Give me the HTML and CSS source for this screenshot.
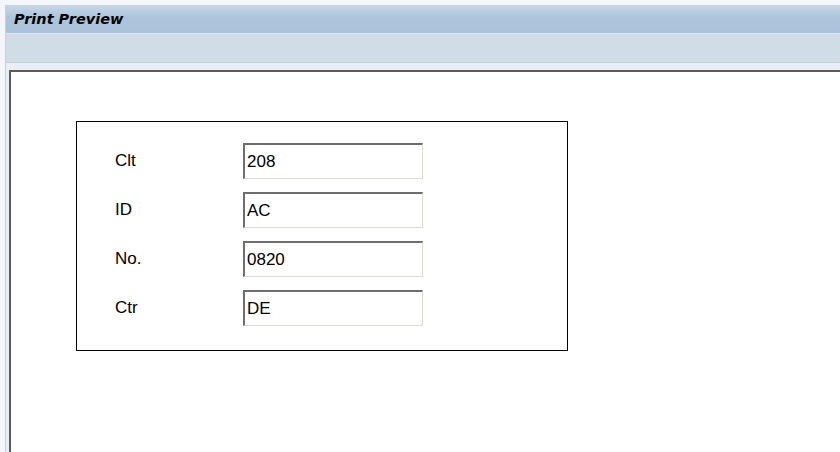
FILE: index.html
```html
<!DOCTYPE html>
<html>
<head>
<meta charset="utf-8">
<link rel="stylesheet" href="styles.css">
</head>
<body>
<div class="frame">
  <div class="title">Print Preview</div>
  <div class="toolbar"></div>
  <div class="gap"></div>
  <div class="content">
    <div class="box">
      <div class="row"><span class="label">Clt</span><span class="field">208</span></div>
      <div class="row"><span class="label">ID</span><span class="field">AC</span></div>
      <div class="row"><span class="label">No.</span><span class="field">0820</span></div>
      <div class="row"><span class="label">Ctr</span><span class="field">DE</span></div>
    </div>
  </div>
</div>
</body>
</html>
```
FILE: styles.css
```css
html, body {
  margin: 0;
  padding: 0;
  width: 840px;
  height: 452px;
  overflow: hidden;
  background: #f3f6fa;
  font-family: "Liberation Sans", Arial, sans-serif;
}
.frame {
  margin: 5px 0 0 5px;
  border-top: 1px solid #c6d3df;
  border-left: 1px solid #c6d3df;
  height: 446px;
  display: flex;
  flex-direction: column;
  background: #e9eff5;
}
.title {
  height: 28px;
  box-sizing: border-box;
  background: linear-gradient(#c6d7e6, #adc5db 40%, #abc3da);
  border-bottom: 1px solid #dfe7ef;
  font-family: "DejaVu Sans", Verdana, sans-serif;
  font-weight: bold;
  font-style: italic;
  font-size: 14.5px;
  color: #000;
  line-height: 26px;
  padding-left: 8px;
}
.toolbar {
  height: 28px;
  background: #d0dde7;
  border-bottom: 1px solid #c2cfdb;
}
.gap {
  height: 7px;
}
.content {
  flex: 1;
  margin-left: 3px;
  background: #fff;
  border-top: 2px solid #5a5a5a;
  border-left: 2px solid #5a5a5a;
  padding: 49px 0 0 65px;
}
.box {
  width: 492px;
  height: 230px;
  border: 1px solid #000;
  box-sizing: border-box;
  padding: 21px 0 0 38px;
  display: flex;
  flex-direction: column;
  gap: 13px;
}
.row {
  display: flex;
  align-items: center;
  height: 36px;
}
.label {
  width: 128px;
  font-size: 17px;
  color: #000;
}
.field {
  width: 180px;
  height: 36px;
  box-sizing: border-box;
  border-top: 2px solid #6e6e6e;
  border-left: 2px solid #6e6e6e;
  border-right: 1px solid #dcdcd4;
  border-bottom: 1px solid #dcdcd4;
  font-size: 17px;
  line-height: 33px;
  padding-left: 2px;
  color: #000;
  background: #fff;
}
```
